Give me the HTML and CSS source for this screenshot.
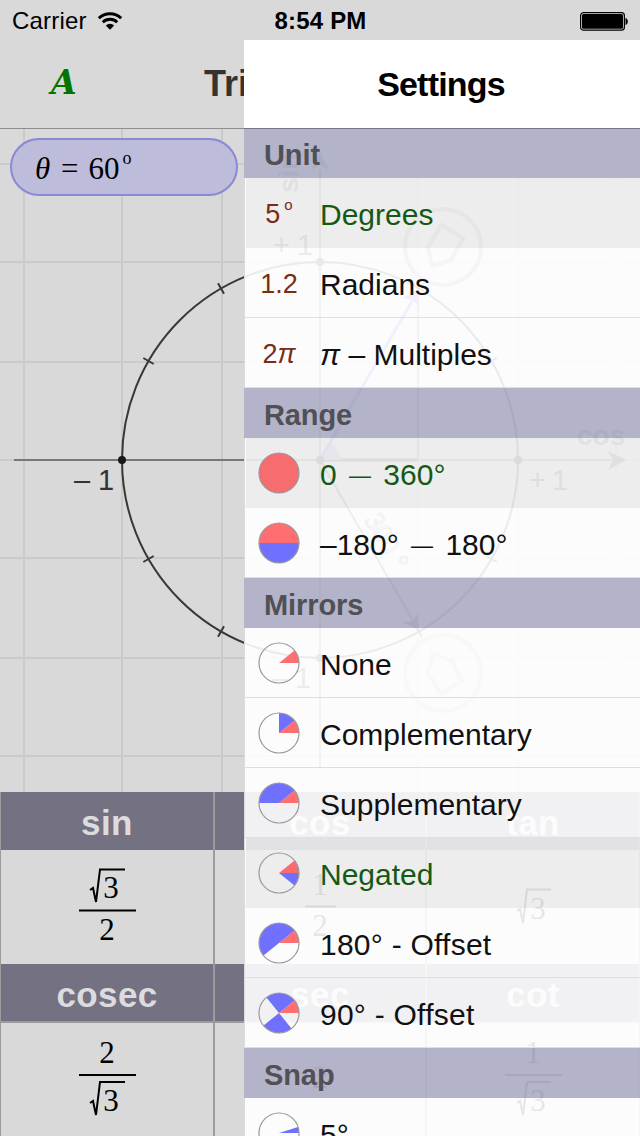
FILE: index.html
```html
<!DOCTYPE html>
<html lang="en">
<head>
    <meta charset="UTF-8">
    <meta name="viewport" content="width=device-width, initial-scale=1.0">
    <title>Settings</title>

    <link rel="stylesheet" href="styles.css">
</head>
<body>
    <div class="phone">
        <div class="statusbar">
            <div class="carrier">
                <span>Carrier</span>
                <svg width="26" height="20" viewBox="0 0 26 20">
                    <path d="M1.8 7.2 A16 16 0 0 1 24.2 7.2" fill="none" stroke="#000" stroke-width="3"/>
                    <path d="M5.8 11.2 A10.3 10.3 0 0 1 20.2 11.2" fill="none" stroke="#000" stroke-width="2.8"/>
                    <path d="M8.8 14.4 A6 6 0 0 1 17.2 14.4 L13 18.8 Z"/>
                </svg>
            </div>
            <div class="time">8:54 PM</div>
            <svg class="battery" width="50" height="20" viewBox="0 0 50 20">
                <rect x="0.6" y="1.6" width="43.8" height="17.6" rx="3" fill="none" stroke="#000" stroke-width="1.2"/>
                <rect x="2" y="3" width="41" height="14.8" rx="1.5"/>
                <path d="M46 7.5 A4 4 0 0 1 46 13.5 Z" stroke="#000"/>
            </svg>
        </div>

        <div class="navbar">
            <span class="mode">A</span>
            <span class="title">Tri</span>
        </div>

        <!-- unit circle -->
        <div class="chart">
            <svg width="640" height="663" viewBox="0 129 640 663">
                <path class="grid" d="M24 129V792M122 129V792M222 129V792M320 129V792M418 129V792M518 129V792M616 129V792M0 164H640M0 262H640M0 362H640M0 460H640M0 558H640M0 658H640M0 756H640"/>
                <path class="axis" d="M14 460H612"/>
                <path class="axis" d="M320 168V768"/>
                <path class="arrow" d="M626 460L608 451L613 460L608 470ZM320 152L311 170L320 165L329 170Z"/>
                <circle class="circle" cx="320" cy="460" r="198"/>
                <!-- ticks every 30 degrees -->
                <g class="circle">
                    <path d="M143.300 358L153.700 364M218 283.300L224 293.700M143.300 562L153.700 556M218 636.700L224 626.300"/>
                    <path d="M496.700 358L486.300 364M496.700 562L486.300 556M422 636.700L416 626.300"/>
                </g>
                <path d="M418 289V460" stroke="#777" stroke-width="2"/>
                <path d="M320 460H418" stroke="#333" stroke-width="3"/>
                <path d="M320 460H340A20 20 0 0 0 330 443Z" fill="#9c9ce0"/>
                <path d="M320 460L415 296" stroke="#6a6aee" stroke-width="3"/>
                <path d="M419 289L418 306L413 300L403 298Z" fill="#6060e8"/>
                <path d="M320 460L415 624" stroke="#555" stroke-width="2"/>
                <path d="M419 631L403 622L413 621L418 613Z" fill="#444"/>
                <circle cx="122" cy="460" r="4" fill="#181818"/>
                <g fill="#222">
                    <circle cx="320" cy="460" r="4"/>
                    <circle cx="518" cy="460" r="4"/>
                    <circle cx="320" cy="262" r="4"/>
                    <circle cx="320" cy="658" r="4"/>
                </g>
                <g class="num">
                    <text x="74" y="490">–</text><text x="98" y="490">1</text>
                    <text x="529" y="490" class="soft">+</text><text x="552" y="490" class="soft">1</text>
                    <text x="273" y="255" class="soft">+</text><text x="297" y="255" class="soft">1</text>
                    <text x="272" y="688" class="soft">–</text><text x="295" y="688" class="soft">1</text>
                </g>
                <text class="fn" x="577" y="445">cos</text>
                <text class="fn" transform="translate(298 193) rotate(-90)">sin</text>
                <text class="deg" transform="translate(364 520) rotate(60)">300 °</text>
                <g class="handle">
                    <circle cx="443" cy="247" r="38"/>
                    <path d="M441.500 225L463 238.500L451 260L432 266L428 247Z"/>
                </g>
                <g class="handle faint">
                    <circle cx="443" cy="673" r="38"/>
                    <path d="M433 654L452 661L462 681L441 694L428 673Z"/>
                </g>
            </svg>
            <div class="theta"><i>θ</i><span>=</span><span>60</span><small>o</small></div>
        </div>

        <!-- values -->
        <div class="values">
            <div class="head">sin</div>
            <div class="head">cos</div>
            <div class="head">tan</div>
            <div class="cell">
                <svg width="100" height="114" viewBox="-50 850 100 114">
                    <path class="bar" d="M-28 910.500H29"/>
                    <path class="root" d="M-17 890L-14 888L-11 902L-7 869.500H18"/>
                    <text x="4" y="898">3</text><text x="0" y="940">2</text>
                </svg>
            </div>
            <div class="cell">
                <svg width="100" height="114" viewBox="-50 850 100 114">
                    <path class="bar" d="M-15 906.500H16"/>
                    <text x="0" y="895">1</text><text x="0" y="936">2</text>
                </svg>
            </div>
            <div class="cell">
                <svg width="100" height="114" viewBox="-50 850 100 114">
                    <path class="root" d="M-16 911L-13 909L-10 923L-6 889.500H18"/>
                    <text x="5" y="919">3</text>
                </svg>
            </div>
            <div class="head line">cosec</div>
            <div class="head line">sec</div>
            <div class="head line">cot</div>
            <div class="cell">
                <svg width="100" height="112" viewBox="-50 1023 100 112">
                    <path class="bar" d="M-28 1075H29"/>
                    <path class="root" d="M-17 1103L-14 1101L-11 1115L-7 1082H18"/>
                    <text x="0" y="1063">2</text><text x="4" y="1111">3</text>
                </svg>
            </div>
            <div class="cell">
                <svg width="100" height="112" viewBox="-50 1023 100 112">
                    <text x="0" y="1088">2</text>
                </svg>
            </div>
            <div class="cell">
                <svg width="100" height="112" viewBox="-50 1023 100 112">
                    <path class="bar" d="M-28 1075H29"/>
                    <path class="root" d="M-16 1103L-13 1101L-10 1115L-6 1082H18"/>
                    <text x="0" y="1063">1</text><text x="5" y="1111">3</text>
                </svg>
            </div>
        </div>

        <!-- settings drawer -->
        <div class="drawer">
            <div class="drawer-title">Settings</div>
            <div class="list">
                <div class="section first">Unit</div>
                <div class="row on"><span class="icon">5<sup>o</sup></span><span class="label">Degrees</span></div>
                <div class="row"><span class="icon">1.2</span><span class="label">Radians</span></div>
                <div class="row"><span class="icon">2<i>π</i></span><span class="label"><i>π</i> – Multiples</span></div>

                <div class="section">Range</div>
                <div class="row on">
                    <svg class="pie" viewBox="-21 -21 42 42"><circle class="red" r="20"/><circle class="ring" r="20"/></svg>
                    <span class="label">0 <span class="dash">—</span> 360°</span>
                </div>
                <div class="row">
                    <svg class="pie" viewBox="-21 -21 42 42"><path class="red" d="M-20 0A20 20 0 0 1 20 0Z"/><path class="blue" d="M-20 0A20 20 0 0 0 20 0Z"/><circle class="ring" r="20"/></svg>
                    <span class="label">–180° <span class="dash">—</span> 180°</span>
                </div>

                <div class="section">Mirrors</div>
                <div class="row">
                    <svg class="pie" viewBox="-21 -21 42 42"><path class="red" d="M0 0L15.500 -12.500A20 20 0 0 1 20 0Z"/><circle class="ring" r="20"/></svg>
                    <span class="label">None</span>
                </div>
                <div class="row">
                    <svg class="pie" viewBox="-21 -21 42 42"><path class="red" d="M0 0L15.500 -12.500A20 20 0 0 1 20 0Z"/><path class="blue" d="M0 0V-20A20 20 0 0 1 15.500 -12.500Z"/><circle class="ring" r="20"/></svg>
                    <span class="label">Complementary</span>
                </div>
                <div class="row">
                    <svg class="pie" viewBox="-21 -21 42 42"><path class="red" d="M0 0L15.500 -12.500A20 20 0 0 1 20 0Z"/><path class="blue" d="M0 0H-20A20 20 0 0 1 15.500 -12.500Z"/><circle class="ring" r="20"/></svg>
                    <span class="label">Supplementary</span>
                </div>
                <div class="row on">
                    <svg class="pie" viewBox="-21 -21 42 42"><path class="red" d="M0 0L15.500 -12.500A20 20 0 0 1 20 0Z"/><path class="blue" d="M0 0L15.500 12.500A20 20 0 0 0 20 0Z"/><circle class="ring" r="20"/></svg>
                    <span class="label">Negated</span>
                </div>
                <div class="row">
                    <svg class="pie" viewBox="-21 -21 42 42"><path class="red" d="M0 0L15.500 -12.500A20 20 0 0 1 20 0Z"/><path class="blue" d="M-15.500 12.500A19.900 19.900 0 0 1 15.500 -12.500Z"/><circle class="ring" r="20"/></svg>
                    <span class="label wide">180° - Offset</span>
                </div>
                <div class="row">
                    <svg class="pie" viewBox="-21 -21 42 42"><path class="red" d="M0 0L15.500 -12.500A20 20 0 0 1 20 0Z"/><path class="blue" d="M0 0L-12.500 -15.500A20 20 0 0 1 15.500 -12.500ZM0 0L12.500 15.500A20 20 0 0 1 -15.500 12.500Z"/><circle class="ring" r="20"/></svg>
                    <span class="label wide">90° - Offset</span>
                </div>

                <div class="section">Snap</div>
                <div class="row">
                    <svg class="pie" viewBox="-21 -21 42 42"><path class="blue" d="M0 0L19 -6A20 20 0 0 1 20 0Z"/><circle class="ring" r="20"/></svg>
                    <span class="label">5°</span>
                </div>
            </div>
        </div>
    </div>
</body>
</html>
```
FILE: styles.css
```css
* {
    box-sizing: border-box;
}

body {
    margin: 0;
    font-family: "Liberation Sans", Arial, sans-serif;
    color: #000;
}

.phone {
    position: relative;
    width: 640px;
    height: 1136px;
    overflow: hidden;
    background-color: #d9d9d9;
}

.statusbar {
    display: grid;
    grid-template-columns: 1fr auto 1fr;
    align-items: center;
    height: 40px;
    padding: 1px 11px 0 12px;
    font-size: 24px;
}

.carrier {
    display: flex;
    align-items: center;
    gap: 10px;
    letter-spacing: 0.2px;
}

.time {
    font-weight: bold;
    letter-spacing: 0.2px;
}

.battery {
    justify-self: end;
    margin-right: -1px;
}

.navbar {
    display: flex;
    height: 89px;
    border-bottom: 1px solid #8e8e92;
    line-height: 88px;
}

.mode {
    width: 153px;
    margin-left: 51px;
    font: italic bold 33px/85px "DejaVu Serif", serif;
    color: #007500;
}

.title {
    font-size: 36px;
    font-weight: bold;
    color: #333;
}

/* chart */
.chart {
    position: relative;
    height: 663px;
}

.chart > svg {
    display: block;
}

.grid {
    stroke: #cacaca;
    stroke-width: 2;
}

.axis {
    stroke: #777;
    stroke-width: 2;
}

.arrow {
    fill: #555;
}

.circle {
    fill: none;
    stroke: #383838;
    stroke-width: 2;
}

.num {
    font-size: 29px;
    fill: #333;
}

.soft {
    fill: #444;
}

.fn {
    font-size: 28px;
    font-weight: bold;
    fill: #666;
}

.deg {
    font-family: "Liberation Serif", serif;
    font-size: 28px;
    fill: none;
    stroke: #666;
}

.handle {
    fill: none;
    stroke: #999;
    stroke-width: 4;
}

.handle.faint {
    stroke: #b4b4b4;
}

.theta {
    position: absolute;
    left: 10px;
    top: 9px;
    display: flex;
    width: 228px;
    height: 58px;
    padding-left: 23px;
    border: 2px solid #8989d6;
    border-radius: 29px;
    background-color: #bdbcdb;
    font: 31px/57px "Liberation Serif", serif;
}

.theta i {
    width: 26px;
}

.theta span + span {
    margin-left: 10px;
}

.theta small {
    margin-left: 3px;
    font-size: 18px;
    line-height: 36px;
}

/* values */
.values {
    display: grid;
    grid-template-columns: 214px 212px 214px;
    grid-template-rows: 58px 114px 59px 113px;
    border-left: 1px solid #9b9b9b;
    border-bottom: 1px solid #9b9b9b;
    margin-right: -1px;
    font-family: "Liberation Serif", serif;
}

.head,
.cell {
    display: flex;
    justify-content: center;
    border-right: 2px solid #9b9b9d;
}

.head {
    align-items: center;
    padding-top: 4px;
    background-color: #747282;
    font-family: "Liberation Sans", Arial, sans-serif;
    font-size: 35px;
    font-weight: bold;
    letter-spacing: 0.4px;
    color: #dcdcdf;
}

.line {
    border-bottom: 2px solid #9b9b9d;
}

.cell text {
    font-size: 31px;
    text-anchor: middle;
}

.bar {
    stroke: #000;
    stroke-width: 2;
}

.root {
    fill: none;
    stroke: #000;
    stroke-width: 2;
}

/* drawer */
.drawer {
    position: absolute;
    left: 244px;
    top: 40px;
    width: 396px;
    height: 1096px;
    overflow: hidden;
}

.drawer-title {
    height: 88px;
    background-color: #fff;
    font-size: 34px;
    font-weight: bold;
    letter-spacing: -0.8px;
    line-height: 89px;
    text-align: center;
    text-indent: -2px;
}

.list {
    background-color: rgba(255, 255, 255, 0.9);
}

.section {
    height: 50px;
    padding-left: 20px;
    background-color: rgba(71, 71, 128, 0.4);
    font-size: 29px;
    font-weight: bold;
    letter-spacing: -0.1px;
    line-height: 54px;
    color: #505055;
}

.first {
    border-top: 1px solid #77758a;
    line-height: 52px;
}

.row {
    display: flex;
    align-items: center;
    height: 70px;
    padding-left: 13px;
    border-left: 1px solid #dcdcde;
    border-bottom: 1px solid #dfdfe2;
    font-size: 30px;
    color: #111;
}

.row.on {
    border-bottom-color: transparent;
    background-color: rgba(0, 0, 0, 0.06);
    box-shadow: inset 1px 0 #fbfbfb;
}

.row.on .label {
    color: #145a14;
}

.icon {
    width: 42px;
    padding-top: 3px;
    font-size: 27px;
    text-align: center;
    color: #7a2c14;
}

.icon sup {
    margin-left: 4px;
    font-size: 15px;
    line-height: 0;
    vertical-align: 13px;
}

.pie {
    width: 42px;
    height: 42px;
}

.label {
    margin-left: 20px;
    padding-top: 4px;
}

.label.wide {
    letter-spacing: 0.25px;
}

.dash {
    margin: 0 4px;
    font-size: 22px;
    vertical-align: 2px;
}

.red {
    fill: #ff6e70;
}

.on .red {
    fill: #f76c6e;
}

.blue {
    fill: #7070ff;
}

.ring {
    fill: none;
    stroke: #999;
    stroke-width: 1.2;
}
```
